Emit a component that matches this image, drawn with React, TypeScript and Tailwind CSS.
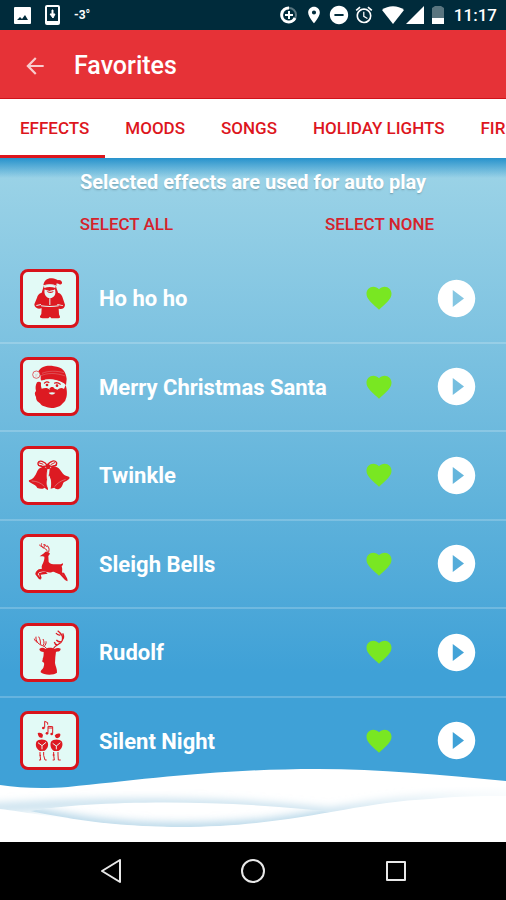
import { useState } from 'react'
import type { ReactNode } from 'react'
import { MdAlarm, MdArrowBack, MdDoNotDisturbOn, MdFavorite, MdLocationOn, MdPlayCircleFilled } from 'react-icons/md'

const tabs = ['Effects', 'Moods', 'Songs', 'Holiday Lights', 'Fireplace']

const RED = '#dd1a22'
const PALE = '#e2faf6'

function SantaIcon() {
  return (
    <g fill={RED}>
      <path d="M70 49C72 34 82 27 96 28c8 0 12 3 18 6 5-2 10 1 12 6 1 5-3 8-8 6-3-3-6-3-9-2l1 6c-12-5-26-5-40-1z" />
      <path d="M71 52c10-5 28-5 37 0 2 10 5 14 6 19 9 2 13 10 15 18l6 18c0 8-6 13-13 13l-6-1 1 16c0 4 3 5 3 9 0 3-3 4-8 4H94l-4-5-5 5H68c-6 0-9-2-8-6l4-7 1-17-8 1c-8 0-14-6-14-13l8-20c2-8 5-12 14-15z" />
      <g fill={PALE}>
        <path d="M72 51c10-5 26-5 35 0l-1 6c-10-4-23-4-33 0z" />
        <path d="M74 61c5 5 9 2 14 5 6-3 11 0 17-5 4 16-2 25-15 27-12-1-19-12-16-27z" />
        <path d="M49 108l14-3v3l-14 3zM112 105l17 4v2l-17-3z" />
        <path d="M63 109c16 3 37 3 53 0v3c-17 3-37 3-53 0z" />
        <path d="M88 88h3v20h-3z" />
      </g>
      <path d="M80 66c5 3 16 3 21 0-1 8-18 8-21 0z" />
    </g>
  )
}

function SantaFaceIcon() {
  return (
    <g fill={RED}>
      <path d="M55 43c9-15 28-19 47-15 25 2 36 16 38 38l-2 19-8-5C108 66 86 65 65 71l-3-4c1-9-1-16-7-24z" />
      <path d="M51 76c5-3 9-2 13 2l-1 9c11 0 21 8 31 4 12 5 24-1 37-4l6-3c4 13 6 31 0 43-1 7-6 9-10 13-5 8-12 8-18 11-8 4-14 1-20 1-7 0-12-3-19-5-6-1-8-7-14-11-6-3-8-11-8-16-4-7-5-14 0-18-2-8-2-17 3-26z" />
      <path d="M61 57c20-10 47-10 75 0M66 49c19-8 43-8 66-2" fill="none" stroke={PALE} strokeWidth="1" opacity=".7" />
      <circle cx="49" cy="53" r="11" fill={PALE} stroke={RED} strokeWidth="2" />
      <path d="M45 50l4 4 5-4M45 57h7" fill="none" stroke={RED} strokeWidth="1" opacity=".6" />
      <g fill={PALE}>
        <path d="M65 71c21-7 45-5 67 8l5 5-5 12c-7-6-14-3-19 2-9-3-16-4-24 0-6-7-15-6-24-3-3-8-3-16 0-24z" />
        <path d="M86 107c6-2 15-2 20 0-4 7-16 7-20 0z" />
      </g>
      <circle cx="81" cy="84" r="4" />
      <circle cx="111" cy="86" r="4" />
      <path d="M71 78c7-7 13-6 18-2l-2 3c-6-4-9-2-14 2zM102 77c7-4 14-3 21 4l-2 3c-7-5-12-5-18-3zM88 96c4-8 13-8 16 0-3 5-13 5-16 0z" />
    </g>
  )
}

function BellsIcon() {
  return (
    <g fill={RED}>
      <path d="M57 68c8-7 19-7 25 0l3 21-2 22 1 21c-6-3-8-5-10-7-9 6-15 3-22 1-3-7-9-10-19-15-5-2-8-5-6-8 12-3 17-12 21-19 3-7 5-12 9-16z" />
      <path d="M89 68c6-8 18-9 27-1 7 7 10 15 17 20 6 4 14 4 16 8-1 7-13 9-19 15-3 9-5 15-13 19-9 2-11-2-14-4l-11 3c4-19-1-29-5-40z" />
      <g fill="none" stroke={RED} strokeWidth="4">
        <path d="M82 59c-7-14-25-18-28-8-2 10 14 13 28 8zM82 59c7-16 26-18 28-8 1 10-13 12-28 8z" />
        <path d="M56 50l14 5M106 49l-14 7M54 58l12 2M111 57l-14 3" strokeWidth="3" />
      </g>
      <path d="M77 60l7-8 8 7-3 10-9 1z" />
      <path d="M84 70c-4 14-4 25 0 36M87 91c-8 12-8 27-1 36 7-10 8-23 1-36z" fill={PALE} stroke={PALE} strokeWidth="2" />
      <path d="M35 105c15 0 28 6 38 16M104 122c6-9 17-17 33-22" fill="none" stroke={PALE} strokeWidth="1" />
    </g>
  )
}

function SleighDeerIcon() {
  return (
    <g fill={RED}>
      <path d="M59 67l13-9 4-5 10 2 4 4-5 7 1 18c6 8 15 7 27 7 7 0 12 0 15-4l1 5-4 5c4 12-1 17 3 24l15 16-1 5-7-4-16-17c-10-3-16-9-22-7-10 3-17 1-22-2l-16 2-6 6 10 14-2 3-5-3-10-13c-1-5 5-12 10-15l10-2c-2-5-1-9 3-16 3-9 5-14 4-20l-5-1z" />
      <path d="M76 112l-20 6 5 17 4-2-3-11 21-3zM102 115l24 4 13 17 3-2-10-18z" />
      <path d="M82 55c-1-10-7-12-14-14-4-4-5-8-3-13M71 42c3-5 2-9 0-12M68 38c-6 0-8-2-9-6M86 54c3-11 0-15-5-20M83 38c-5 0-8-3-9-8" fill="none" stroke={RED} strokeWidth="3" />
    </g>
  )
}

function RudolfIcon() {
  return (
    <g fill={RED}>
      <path d="M58 78c6-5 13-4 19 0 6-5 20-5 26 0 6-3 14-4 19-1 0 7-7 9-14 9l-2 16-1 18c1 10 7 17 6 29-8 8-40 8-49-1-1-6 5-9 8-14 2-6 3-10 2-15l-5-3c-1-4 2-6 1-9 3-6 3-12 3-20-7 0-13-3-13-9z" />
      <path d="M80 77C74 66 60 69 52 58c-3-5-5-12-4-17M53 58c-6-2-9-6-10-11M61 63c1-9-1-15-5-22M70 67c4-8 1-14-1-19M72 70c5-4 7-9 6-15" fill="none" stroke={RED} strokeWidth="3" />
      <path d="M100 77c5-12 23-12 27-25 3-12-3-21-14-29M127 50c5-5 5-11 1-19M121 36c-6 1-10-1-13-6M124 57c-8 0-12-2-15-6M112 66c-5-1-8-4-9-9" fill="none" stroke={RED} strokeWidth="4" />
    </g>
  )
}

function CarolersIcon() {
  return (
    <g fill={RED}>
      <g fill="none" stroke={RED} strokeWidth="3">
        <path d="M74 50V31l9 4v6M84 65V46l14 1v21M84 51h14" />
      </g>
      <circle cx="70" cy="51" r="4" />
      <circle cx="81" cy="67" r="4" />
      <circle cx="95" cy="69" r="4" />
      <path d="M53 67c6-3 13-1 16 5l-2 8c-7 2-12-1-14-13zM104 74c4-6 11-8 17-5 1 9-5 14-13 12z" />
      <path d="M49 92c7-9 26-9 33 0 6 10 0 22-8 27l-14 1c-10-6-15-16-11-28zM93 92c7-9 26-9 33 0 4 12-1 21-11 28h-13c-9-5-13-19-9-28z" />
      <g fill="none" stroke={PALE} strokeWidth="3">
        <path d="M54 95l12 9 12-10M66 104v11M98 97l11 8 12-10M109 104v11" />
      </g>
      <g fill="none" stroke={RED} strokeWidth="3">
        <path d="M60 123v9l2 15h-5M71 123v10l4 14h5M59 133h4M101 123v9l2 15h-5M114 123v9l1 15h7M104 132h-6" />
      </g>
    </g>
  )
}

const initialEffects: { name: string; icon: ReactNode; favorite: boolean }[] = [
  { name: 'Ho ho ho', icon: <SantaIcon />, favorite: true },
  { name: 'Merry Christmas Santa', icon: <SantaFaceIcon />, favorite: true },
  { name: 'Twinkle', icon: <BellsIcon />, favorite: true },
  { name: 'Sleigh Bells', icon: <SleighDeerIcon />, favorite: true },
  { name: 'Rudolf', icon: <RudolfIcon />, favorite: true },
  { name: 'Silent Night', icon: <CarolersIcon />, favorite: true },
]

function StatusBar() {
  return (
    <div className="flex h-[30px] items-center justify-between bg-[#002b3b] pl-3.5 pr-[9px] text-white">
      <div className="flex items-center">
        <svg className="h-[17px] w-[17px]" viewBox="0 0 17 17">
          <rect width="17" height="17" rx="1" fill="#fff" />
          <path d="M3 13l3-3 2 2 3-4 3 5z" fill="#002b3b" />
        </svg>
        <svg className="ml-3.5 h-5 w-[15px]" viewBox="0 0 15 20">
          <rect x="1" y="1" width="13" height="18" rx="1" fill="none" stroke="#fff" strokeWidth="2" />
          <path d="M1 16h13v3H1z" fill="#fff" />
          <path d="M7 5h1v4h2l-2 4-3-4h2z" fill="#fff" stroke="#fff" />
        </svg>
        <span className="ml-3.5 text-xs font-bold">-3°</span>
      </div>
      <div className="flex items-center">
        <svg className="mr-1.5 h-[18px] w-[18px]" viewBox="0 0 18 18" fill="none" stroke="#fff">
          <circle cx="9" cy="9" r="7" strokeWidth="2" opacity=".35" />
          <path d="M9 2a7 7 0 1 0 6 10" strokeWidth="3" />
          <path d="M9 5v8M5 9h8" strokeWidth="2" />
        </svg>
        <MdLocationOn className="mr-1 h-5 w-5" />
        <MdDoNotDisturbOn className="mr-1 h-[22px] w-[22px]" />
        <MdAlarm className="mr-2 h-5 w-5" />
        <svg className="h-[18px] w-[22px]" viewBox="0 0 22 18" fill="#fff">
          <path d="M0 4C6-1 16-1 22 4L11 18z" />
        </svg>
        <svg className="ml-0.5 h-[18px] w-[18px]" viewBox="0 0 18 18" fill="#fff">
          <path d="M18 0v18H0z" />
        </svg>
        <svg className="ml-2 mr-2.5 h-[18px] w-3" viewBox="0 0 12 18" fill="#fff">
          <path d="M3 0h6l3 2v10H0V2z" opacity=".35" />
          <path d="M0 12h12v6H0z" />
        </svg>
        <span className="text-[17px] leading-5 font-medium">11:17</span>
      </div>
    </div>
  )
}

function Snow() {
  return (
    <svg className="pointer-events-none absolute inset-x-0 bottom-0 h-[75px] w-full" viewBox="0 0 506 75" preserveAspectRatio="none">
      <defs>
        <filter id="drift" x="-10%" y="-50%" width="120%" height="200%">
          <feGaussianBlur stdDeviation="5" />
        </filter>
        <clipPath id="hill">
          <path d="M0 18C20 21 42 22 68 20C140 13 215 2 318 2C380 2 440 8 506 14V75H0z" />
        </clipPath>
        <clipPath id="lens">
          <path d="M30 44C90 34 220 31 340 46C300 54 260 60 180 60C110 60 60 50 30 44z" />
        </clipPath>
        <linearGradient id="rightFade" x1="0" x2="1">
          <stop offset="0" stopColor="#b4d5e7" />
          <stop offset=".65" stopColor="#b4d5e7" />
          <stop offset=".9" stopColor="#eef6fa" />
          <stop offset="1" stopColor="#f8fbfd" />
        </linearGradient>
      </defs>
      <path d="M0 18C20 21 42 22 68 20C140 13 215 2 318 2C380 2 440 8 506 14V75H0z" fill="#fff" />
      <g clipPath="url(#hill)">
        <path d="M-20 42C110 34 220 34 330 46C400 34 440 30 526 29" fill="none" stroke="url(#rightFade)" strokeWidth="7" filter="url(#drift)" />
      </g>
      <path d="M30 44C90 34 220 31 340 46C300 54 260 60 180 60C110 60 60 50 30 44z" fill="#fff" />
      <g clipPath="url(#lens)">
        <path d="M20 43C60 52 110 61 180 61C250 61 300 54 350 43" fill="none" stroke="#a8cfe4" strokeWidth="9" filter="url(#drift)" />
      </g>
      <path d="M0 42C50 48 90 60 180 60C290 60 350 36 430 32C460 29 480 29 506 29V75H0z" fill="#fff" />
    </svg>
  )
}

function NavBar() {
  return (
    <nav className="flex h-[58px] items-center justify-between bg-black px-[98px] text-[#e8e8e8]">
      <button aria-label="Back">
        <svg className="h-6 w-6" viewBox="0 0 24 24" fill="none" stroke="currentColor" strokeWidth="2" strokeLinejoin="round">
          <path d="M22 1v22L4 12z" />
        </svg>
      </button>
      <button aria-label="Home">
        <svg className="h-6 w-6" viewBox="0 0 24 24" fill="none" stroke="currentColor" strokeWidth="2">
          <circle cx="12" cy="12" r="11" />
        </svg>
      </button>
      <button aria-label="Recent apps">
        <svg className="h-6 w-6" viewBox="0 0 24 24" fill="none" stroke="currentColor" strokeWidth="2" strokeLinejoin="round">
          <path d="M3 3h18v18H3z" />
        </svg>
      </button>
    </nav>
  )
}

export default function App() {
  const [activeTab, setActiveTab] = useState('Effects')
  const [effects, setEffects] = useState(initialEffects)

  function setAll(favorite: boolean) {
    setEffects(effects.map(e => ({ ...e, favorite })))
  }

  function toggleFavorite(name: string) {
    setEffects(effects.map(e => (e.name === name ? { ...e, favorite: !e.favorite } : e)))
  }

  return (
    <div className="flex min-h-screen flex-col overflow-hidden font-[Roboto,sans-serif]">
      <StatusBar />

      <header className="flex h-[69px] items-center gap-[26px] border-b border-[#d0121a] bg-[#e63237] px-[22px] pt-1 text-white">
        <button aria-label="Back">
          <MdArrowBack className="h-[26px] w-[26px] opacity-75" />
        </button>
        <h1 className="text-[25px] font-medium">Favorites</h1>
      </header>

      <div role="tablist" className="flex overflow-hidden bg-white">
        {tabs.map(tab => (
          <button
            key={tab}
            role="tab"
            aria-selected={tab === activeTab}
            onClick={() => setActiveTab(tab)}
            className={`h-[59px] shrink-0 border-b-3 pl-5 pr-4 pt-1 text-[17px] font-medium uppercase text-[#dd161d] ${
              tab === activeTab ? 'border-[#dd161d]' : 'border-transparent'
            }`}
          >
            {tab}
          </button>
        ))}
      </div>

      <main className="relative flex flex-1 flex-col bg-linear-to-b from-[#9dd4e7] via-[#60b3db] via-50% to-[#3fa1d7] to-75% pb-14">
        <div className="absolute inset-x-0 top-0 h-5 bg-linear-to-b from-[#2792cc] to-transparent" />

        <div className="relative h-[97px] pt-3">
          <p className="text-center text-xl leading-6 font-bold text-white text-shadow-sm">
            Selected effects are used for auto play
          </p>
          <div className="mt-[18px] grid grid-cols-2 text-[17px] leading-6 font-medium text-[#d5222b]">
            <button className="uppercase" onClick={() => setAll(true)}>Select all</button>
            <button className="uppercase" onClick={() => setAll(false)}>Select none</button>
          </div>
        </div>

        <ul className="grid flex-1 auto-rows-fr">
          {effects.map(effect => (
            <li key={effect.name} className="flex items-center border-b-2 border-white/20 pl-5 pr-[27px] last:border-transparent">
              <div className="h-[59px] w-[59px] shrink-0 rounded-lg border-3 border-[#d8131b] bg-[#e2faf6]">
                <svg className="h-[53px] w-[53px]" viewBox="9 9 159 159">{effect.icon}</svg>
              </div>
              <span className="ml-5 flex-1 pt-px text-[22px] font-bold text-white">{effect.name}</span>
              <button aria-label={`Favorite ${effect.name}`} aria-pressed={effect.favorite} onClick={() => toggleFavorite(effect.name)}>
                <MdFavorite className={`h-[30px] w-[30px] ${effect.favorite ? 'text-[#79e722]' : 'text-white/50'}`} />
              </button>
              <button aria-label={`Play ${effect.name}`} className="ml-10">
                <MdPlayCircleFilled className="h-[45px] w-[45px] text-white" />
              </button>
            </li>
          ))}
        </ul>

        <Snow />
      </main>

      <NavBar />
    </div>
  )
}
